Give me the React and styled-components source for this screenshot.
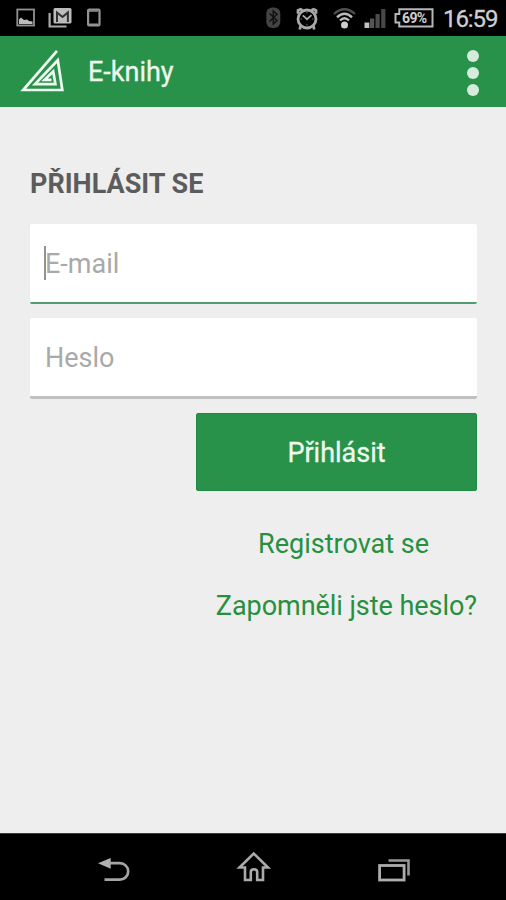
import React from 'react';
import styled, { createGlobalStyle } from 'styled-components';

const GlobalStyle = createGlobalStyle`
  *, *::before, *::after { box-sizing: border-box; }
  body { margin: 0; background: #eee; font-family: Roboto, "Noto Sans", sans-serif; }
`;

const Screen = styled.div`
  display: flex;
  flex-direction: column;
  width: 506px;
  height: 900px;
  background: #eeeeee;
  overflow: hidden;
`;

const StatusBar = styled.header`
  display: flex;
  align-items: center;
  justify-content: space-between;
  height: 36px;
  padding: 0 8px 0 16px;
  background: #000;
  flex: none;
`;

const IconGroup = styled.div`
  display: flex;
  align-items: center;
  gap: ${(p) => p.$gap}px;
`;

const Icon = styled.svg`
  display: block;
  flex: none;
  overflow: visible;
`;

const Battery = styled.div`
  display: grid;
  width: 40px;
  height: 20px;
`;

const BatteryShape = styled(Icon)`
  grid-area: 1 / 1;
`;

const BatteryLevel = styled.span`
  grid-area: 1 / 1;
  align-self: center;
  padding-left: 8px;
  font-size: 14px;
  line-height: 20px;
  font-weight: 700;
  letter-spacing: -0.6px;
  color: #d0d0d0;
`;

const Clock = styled.time`
  width: 55px;
  margin-left: 1px;
  padding-top: 1px;
  font-size: 24px;
  line-height: 36px;
  letter-spacing: -1.1px;
  color: #cfcfcf;
  -webkit-text-stroke: 0.3px #cfcfcf;
  white-space: nowrap;
`;

const AppBar = styled.div`
  display: flex;
  align-items: center;
  height: 71px;
  padding: 0 27px 0 19px;
  background: #28924b;
  flex: none;
`;

const Title = styled.h1`
  flex: 1;
  margin: 0 0 0 24px;
  font-size: 27px;
  line-height: 36px;
  font-weight: 400;
  letter-spacing: 0;
  color: #eef8ee;
  -webkit-text-stroke: 0.3px #eef8ee;
`;

const MenuButton = styled.button`
  display: flex;
  flex-direction: column;
  gap: 5px;
  padding: 3px 0 0;
  border: 0;
  background: none;
`;

const Dot = styled.span`
  width: 12px;
  height: 12px;
  border-radius: 50%;
  background: #d5ebdb;
`;

const Form = styled.main`
  display: flex;
  flex-direction: column;
  flex: 1;
  padding: 61px 29px 0 30px;
`;

const Heading = styled.h2`
  margin: 0 0 24px;
  font-size: 27px;
  line-height: 32px;
  font-weight: 700;
  letter-spacing: 0;
  color: #5c5c5c;
`;

const Field = styled.label`
  display: flex;
  align-items: center;
  height: ${(p) => (p.$active ? 80 : 81)}px;
  margin-bottom: 14px;
  padding: 2px 15px 0;
  border-bottom: ${(p) => (p.$active ? '2px solid #529a6f' : '3px solid #c0c0c0')};
  border-radius: 2px;
  background: #fff;
`;

const Caret = styled.span`
  width: 2px;
  height: 34px;
  margin: 0 -1px 2px -1px;
  background: #939393;
`;

const Placeholder = styled.span`
  font-size: 27px;
  line-height: 36px;
  color: #a9a9a9;
`;

const Actions = styled.div`
  display: flex;
  flex-direction: column;
  align-self: flex-end;
  width: 281px;
`;

const Submit = styled.button`
  height: 78px;
  border: 1px solid #1e8a42;
  border-radius: 2px;
  padding: 2px 0 0;
  background: #28924b;
  color: #f0f9ee;
  font: 400 27px/36px Roboto, "Noto Sans", sans-serif;
  -webkit-text-stroke: 0.3px #f0f9ee;
`;

const Link = styled.a`
  margin-top: ${(p) => p.$top}px;
  padding-right: ${(p) => p.$right}px;
  font-size: 27px;
  line-height: 36px;
  letter-spacing: ${(p) => p.$spacing}px;
  text-align: right;
  color: #26903f;
  white-space: nowrap;
`;

const NavBar = styled.nav`
  display: flex;
  align-items: flex-start;
  height: 67px;
  padding: 24px 95px 0 98px;
  justify-content: space-between;
  border-top: 1px solid #3c3c3c;
  background: #000;
  flex: none;
`;

function PictureIcon() {
  return (
    <Icon width="19" height="20" fill="none">
      <rect x="1.3" y="1.5" width="16.7" height="16" stroke="#929292" strokeWidth="1.8" />
      <path d="M3 16V11.5L5 9.5 8 12 11 11.5 13 13 16.5 13.5V16Z" fill="#bcbcbc" />
    </Icon>
  );
}

function MailIcon() {
  return (
    <Icon width="23" height="20" fill="none">
      <path d="M0.6 5V18.5H17.5" stroke="#aaa" strokeWidth="2.2" />
      <rect x="4.5" y="0" width="18" height="15.5" rx="1.5" fill="#bcbcbc" />
      <path d="M8 14V4.5L13.5 9 18.9 4.5V14" stroke="#303030" strokeWidth="2" />
    </Icon>
  );
}

function PhoneIcon() {
  return (
    <Icon width="14" height="20" fill="none">
      <rect x="2.1" y="1.5" width="11.4" height="16" rx="1" stroke="#949494" strokeWidth="2.2" />
      <path d="M3 3H12M3 16.3H12" stroke="#949494" strokeWidth="1.5" />
    </Icon>
  );
}

function BluetoothIcon() {
  return (
    <Icon width="15" height="22" fill="none">
      <rect x="0.3" y="0.5" width="14" height="20.5" rx="6" fill="#444" />
      <path d="M3.5 6.5 11 13.5 7.3 17V4L11 7.3 3.5 14.5" stroke="#111" strokeWidth="1.5" />
    </Icon>
  );
}

function AlarmIcon() {
  return (
    <Icon width="22" height="23" fill="none" stroke="#a9a9a9">
      <circle cx="11" cy="12" r="9" strokeWidth="2.8" />
      <path d="M2 6.8V3.3L4.5 2.3 6.5 3.3M20 6.8V3.3L17.5 2.3 15.5 3.3M4.5 19 3.8 22.5M17.5 19 18.2 22.5" strokeWidth="2.7" />
      <path d="M6.8 8.4 11 12.2 15.5 8.2" strokeWidth="1.8" />
      <path d="M11 5V6.5M11 17V18.5M4.5 12H6M16 12H17.5" strokeWidth="1" stroke="#666" />
    </Icon>
  );
}

function WifiIcon() {
  return (
    <Icon width="23" height="21" fill="none">
      <path d="M1 6Q11.5 -3.5 22 6" stroke="#505050" strokeWidth="2.2" />
      <path d="M4 9.2Q11.5 2.4 19 9.2" stroke="#bbb" strokeWidth="2.5" />
      <path d="M7 12.5Q11.5 8.2 16 12.5" stroke="#bbb" strokeWidth="2.4" />
      <circle cx="11.5" cy="17" r="3.5" fill="#cecece" />
    </Icon>
  );
}

function SignalIcon() {
  return (
    <Icon width="22" height="20">
      <rect x="0.5" y="14.5" width="4.8" height="5.5" fill="#c2c2c2" />
      <rect x="6" y="10.5" width="4.2" height="9.5" fill="#555" />
      <rect x="11.5" y="6" width="4.2" height="14" fill="#4c4c4c" />
      <rect x="17.2" y="1" width="4.2" height="19" fill="#484848" />
    </Icon>
  );
}

function LogoIcon() {
  return (
    <Icon width="45" height="44" viewBox="0 1.3 45 44" fill="none">
      <path
        d="M38 2.2 4.2 41.3H43.3L38.8 11.5 16 35.4H36.4L34.2 22.8 25.5 31.2H32.5"
        stroke="#effaf1"
        strokeWidth="2.7"
        strokeMiterlimit="6"
      />
    </Icon>
  );
}

function BackIcon() {
  return (
    <Icon width="32" height="26" fill="none">
      <path d="M0 5.2 12.7 0V10.7Z" fill="#b2b2b2" />
      <path d="M11 5.2H22A8 8 0 0 1 22 21.6H6.5" stroke="#a5a5a5" strokeWidth="2.7" />
    </Icon>
  );
}

function HomeIcon() {
  return (
    <Icon width="32" height="32" fill="none">
      <path
        d="M1.5 9.5 15.7 -4.5 30 9.5H25V22H19.2V14Q19.2 11.2 16 11.2 12.8 11.2 12.8 14V22H7V9.5Z"
        stroke="#aaa"
        strokeWidth="2.6"
      />
    </Icon>
  );
}

function RecentIcon() {
  return (
    <Icon width="33" height="24" fill="none">
      <path d="M10.5 2.5H30.5V17.5" stroke="#989898" strokeWidth="2.6" />
      <rect x="1.6" y="7.5" width="24.5" height="14.5" stroke="#adadad" strokeWidth="2.8" />
    </Icon>
  );
}

export default function App() {
  return (
    <>
      <GlobalStyle />
      <Screen>
        <StatusBar>
          <IconGroup $gap={14}>
            <PictureIcon />
            <MailIcon />
            <PhoneIcon />
          </IconGroup>
          <IconGroup $gap={8}>
            <IconGroup $gap={15}>
              <BluetoothIcon />
              <AlarmIcon />
              <WifiIcon />
            </IconGroup>
            <SignalIcon />
            <Battery>
              <BatteryShape width="40" height="20" fill="none">
                <path d="M5.3 1.2H38.5V18.6H5.3V14.5H1.5V6H5.3Z" stroke="#b7b7b7" strokeWidth="2" />
              </BatteryShape>
              <BatteryLevel>69%</BatteryLevel>
            </Battery>
            <Clock>16:59</Clock>
          </IconGroup>
        </StatusBar>
        <AppBar>
          <LogoIcon />
          <Title>E-knihy</Title>
          <MenuButton aria-label="Menu">
            <Dot />
            <Dot />
            <Dot />
          </MenuButton>
        </AppBar>
        <Form>
          <Heading>PŘIHLÁSIT SE</Heading>
          <Field $active>
            <Caret />
            <Placeholder>E-mail</Placeholder>
          </Field>
          <Field>
            <Placeholder>Heslo</Placeholder>
          </Field>
          <Actions>
            <Submit>Přihlásit</Submit>
            <Link $top={35} $right={48} $spacing={0}>Registrovat se</Link>
            <Link $top={26} $right={0} $spacing={-0.05}>Zapomněli jste heslo?</Link>
          </Actions>
        </Form>
        <NavBar>
          <BackIcon />
          <HomeIcon />
          <RecentIcon />
        </NavBar>
      </Screen>
    </>
  );
}
